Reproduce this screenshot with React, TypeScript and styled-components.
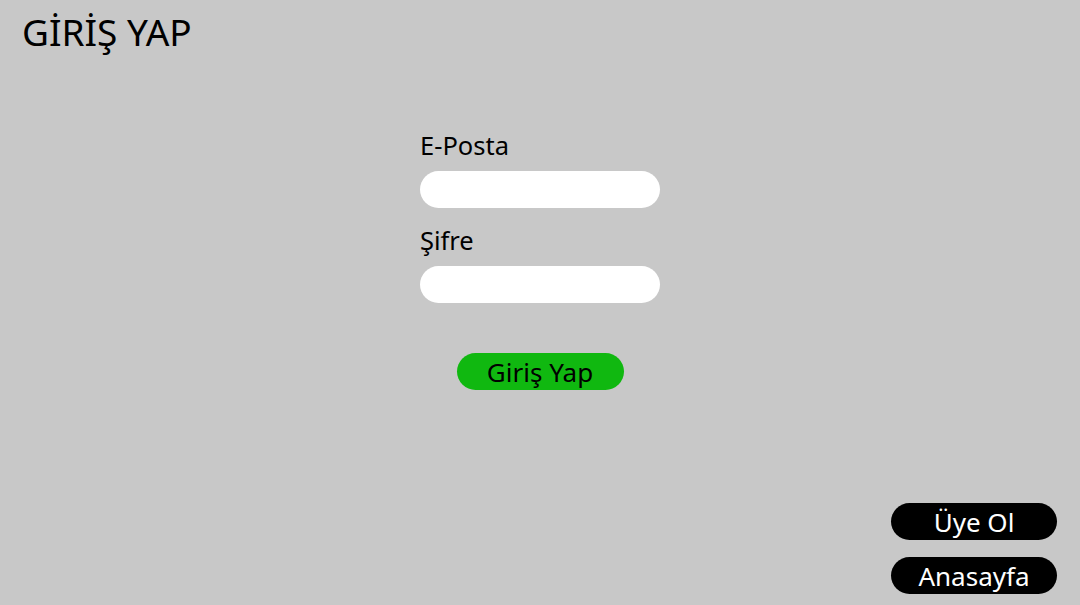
import React from "react";
import styled, { createGlobalStyle } from "styled-components";

const Global = createGlobalStyle`
  html, body { margin: 0; padding: 0; }
  body {
    background: #c8c8c8;
    font-family: "Noto Sans", "Open Sans", sans-serif;
    color: #000;
  }
  * { box-sizing: border-box; }
`;

const Page = styled.div`
  width: 1080px;
  height: 605px;
  display: flex;
  flex-direction: column;
  background: #c8c8c8;
  overflow: hidden;
`;

const Title = styled.h1`
  margin: 0;
  padding: 7px 0 0 22px;
  font-size: 37px;
  font-weight: 400;
  line-height: 49px;
`;

const Form = styled.form`
  align-self: center;
  width: 240px;
  margin-top: 77px;
  display: flex;
  flex-direction: column;
`;

const Label = styled.label<{ $top: number }>`
  display: block;
  margin-top: ${(p) => p.$top}px;
  font-size: 25.5px;
  line-height: 25px;
  height: 25px;
`;

const Input = styled.input`
  width: 240px;
  height: 37px;
  margin-top: 13px;
  border: none;
  border-radius: 19px;
  background: #fff;
  padding: 0 16px;
  font-family: inherit;
  font-size: 18px;
  outline: none;
`;

const Submit = styled.button`
  align-self: center;
  width: 167px;
  height: 37px;
  margin-top: 50px;
  border: none;
  border-radius: 19px;
  background: #10b810;
  color: #000;
  font-family: inherit;
  font-size: 26px;
  line-height: 1;
  padding: 0;
`;

const Nav = styled.nav`
  margin-top: auto;
  align-self: flex-end;
  display: flex;
  flex-direction: column;
  gap: 17px;
  padding: 0 23px 11px 0;
`;

const NavButton = styled.button`
  width: 166px;
  height: 37px;
  border: none;
  border-radius: 19px;
  background: #000;
  color: #fff;
  font-family: inherit;
  font-size: 26px;
  line-height: 1;
  padding: 0;
`;

export default function App() {
  return (
    <Page>
      <Global />
      <Title>GİRİŞ YAP</Title>
      <Form onSubmit={(e) => e.preventDefault()}>
        <Label $top={0} htmlFor="email">E-Posta</Label>
        <Input id="email" type="email" />
        <Label $top={20} htmlFor="password">Şifre</Label>
        <Input id="password" type="password" />
        <Submit type="submit">Giriş Yap</Submit>
      </Form>
      <Nav>
        <NavButton type="button">Üye Ol</NavButton>
        <NavButton type="button">Anasayfa</NavButton>
      </Nav>
    </Page>
  );
}
